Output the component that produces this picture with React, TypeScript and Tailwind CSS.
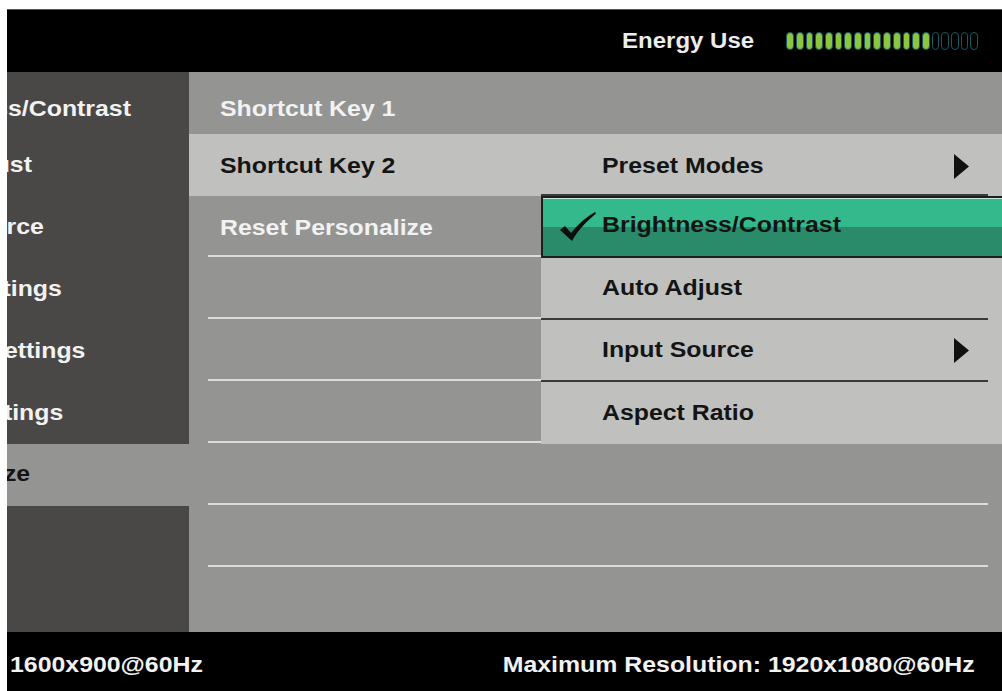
import React from "react";

const font = "font-['Liberation_Sans',Arial,sans-serif] font-bold text-[22px] leading-none whitespace-nowrap";

function T({ children, dark, right }: { children: React.ReactNode; dark?: boolean; right?: boolean }) {
  return (
    <span
      className={`${font} inline-block scale-x-[1.13] ${right ? "origin-right" : "origin-left"} ${
        dark ? "text-[#141414]" : "text-[#f2f2f2]"
      }`}
    >
      {children}
    </span>
  );
}

function Arrow() {
  return (
    <svg width="17" height="25" viewBox="0 0 17 25" className="shrink-0">
      <polygon points="1,0 16,12.5 1,25" fill="#111" />
    </svg>
  );
}

function Check() {
  return (
    <svg width="36" height="30" viewBox="0 0 36 30" className="shrink-0">
      <path d="M0,18 L5,14 L11,21 C18,12 26,5 35,0 L36,1.5 C27,9 18,18 12,29 Z" fill="#0d0d0d" />
    </svg>
  );
}

const sidebarItems = [
  "Brightness/Contrast",
  "Auto Adjust",
  "Input Source",
  "Color Settings",
  "Display Settings",
  "Other Settings",
];

function WhiteLine({ full }: { full?: boolean }) {
  return <div className={`h-[2px] bg-[#dcdcdc] ml-[19px] mb-[1px] ${full ? "mr-[14px]" : ""}`} />;
}

function DarkLine() {
  return <div className="h-[2px] bg-[#3a3a3a] mr-[14px]" />;
}

export default function App() {
  const pills = Array.from({ length: 20 }, (_, i) => i < 15);
  return (
    <div className="w-[1002px] h-[691px] bg-white pt-[9px] pl-[7px] flex flex-col overflow-hidden">
      {/* top bar */}
      <div className="h-[63px] shrink-0 bg-black border-t border-[#555] flex items-center justify-end pr-[24px]">
        <span className={`${font} inline-block scale-x-[1.09] origin-right text-[#ececec]`}>Energy Use</span>
        <div className="flex gap-[2px] ml-[32px]">
          {pills.map((on, i) => (
            <div
              key={i}
              className={`w-[7.7px] h-[18px] rounded-full border border-[#175a64] ${on ? "bg-[#8cc63f]" : "bg-black"}`}
            />
          ))}
        </div>
      </div>

      {/* middle */}
      <div className="h-[560px] shrink-0 flex">
        {/* sidebar */}
        <div className="w-[182px] shrink-0 bg-[#4a4846] flex flex-col overflow-hidden">
          {sidebarItems.map((s, i) => (
            <div key={s} className={`h-[62px] shrink-0 flex items-center ml-[-115px] ${i === 0 ? "pt-[12px]" : ""}`}>
              <T>{s}</T>
            </div>
          ))}
          <div className="h-[62px] shrink-0 flex items-center bg-[#949593]">
            <div className="ml-[-115px]">
              <T dark>Personalize</T>
            </div>
          </div>
        </div>

        {/* main */}
        <div className="flex-1 bg-[#949593] flex flex-col">
          {/* row 1 */}
          <div className="h-[62px] shrink-0 flex">
            <div className="w-[352px] flex items-center pl-[31px] pt-[12px]">
              <T>Shortcut Key 1</T>
            </div>
          </div>
          {/* row 2 */}
          <div className="h-[62px] shrink-0 flex bg-[#c0c1bf]">
            <div className="w-[352px] flex items-center pl-[31px] pt-[2px]">
              <T dark>Shortcut Key 2</T>
            </div>
            <div className="flex-1 flex flex-col">
              <div className="flex-1 flex items-center justify-between pl-[61px] pr-[32px] pt-[4px]">
                <T dark>Preset Modes</T>
                <Arrow />
              </div>
              <DarkLine />
            </div>
          </div>
          {/* row 3 */}
          <div className="h-[62px] shrink-0 flex">
            <div className="w-[352px] flex flex-col">
              <div className="flex-1 flex items-center pl-[31px] pt-[4px]">
                <T>Reset Personalize</T>
              </div>
              <WhiteLine />
            </div>
            <div className="flex-1 flex items-center pl-[17px] border-2 border-r-0 border-[#1e1e1e] bg-[linear-gradient(to_bottom,#34b98d_50%,#2a8b6b_50%)] shadow-[inset_0_1px_0_#bfe9d9]">
              <Check />
              <div className="ml-[6px] mb-[3px]">
                <T dark>Brightness/Contrast</T>
              </div>
            </div>
          </div>
          {/* rows 4-6 */}
          {["Auto Adjust", "Input Source", "Aspect Ratio"].map((s, i) => (
            <div key={s} className="h-[62px] shrink-0 flex">
              <div className="w-[352px] flex flex-col justify-end">
                <WhiteLine />
              </div>
              <div className="flex-1 flex flex-col bg-[#c0c1bf]">
                <div className="flex-1 flex items-center justify-between pl-[61px] pr-[32px]">
                  <T dark>{s}</T>
                  {i === 1 && <Arrow />}
                </div>
                {i < 2 && <DarkLine />}
              </div>
            </div>
          ))}
          {/* rows 7-8 */}
          <div className="h-[62px] shrink-0 flex flex-col justify-end">
            <WhiteLine full />
          </div>
          <div className="h-[62px] shrink-0 flex flex-col justify-end">
            <WhiteLine full />
          </div>
          <div className="flex-1" />
        </div>
      </div>

      {/* bottom bar */}
      <div className="flex-1 bg-black flex items-center justify-between pl-[3px] pr-[27px] pt-[6px]">
        <T>1600x900@60Hz</T>
        <T right>Maximum Resolution: 1920x1080@60Hz</T>
      </div>
    </div>
  );
}
